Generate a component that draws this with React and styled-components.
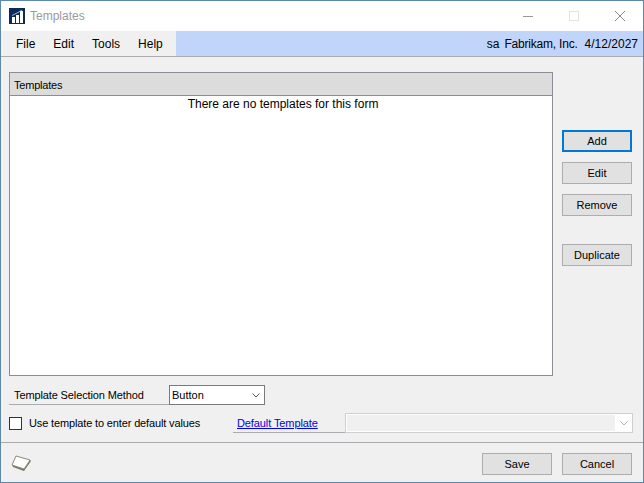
import styled, { createGlobalStyle } from "styled-components";

const GlobalStyle = createGlobalStyle`
  html, body {
    margin: 0;
    padding: 0;
    background: #f0f0f0;
  }
  * {
    box-sizing: border-box;
  }
`;

const Win = styled.div`
  width: 644px;
  height: 483px;
  display: flex;
  flex-direction: column;
  border: 1px solid #5d88a9;
  background: #f0f0f0;
  color: #000;
  font-family: "Liberation Sans", Arial, sans-serif;
  font-size: 11px;
  overflow: hidden;
`;

const TitleBar = styled.div`
  height: 30px;
  flex: none;
  display: flex;
  align-items: center;
  background: #fff;
  padding-left: 8px;
`;

const WinTitle = styled.span`
  margin-left: 5px;
  color: #9a9a9a;
  font-size: 12px;
`;

const WinControls = styled.div`
  margin-left: auto;
  display: flex;
`;

const WinControl = styled.div`
  width: 46px;
  height: 30px;
  display: flex;
  align-items: center;
  justify-content: center;
`;

const MenuRow = styled.div`
  height: 26px;
  flex: none;
  display: flex;
  background: #c1d5fb;
  border-bottom: 1px solid #acacb0;
  font-size: 12px;
`;

const MenuList = styled.div`
  width: 175px;
  display: flex;
  align-items: center;
  background: #f0f0f0;
  padding-left: 15px;
  gap: 18px;
`;

const UserInfo = styled.div`
  margin-left: auto;
  padding-right: 5px;
  display: flex;
  align-items: center;
  gap: 5px;
`;

const CompanyName = styled.span`
  margin-right: 2px;
  letter-spacing: -0.2px;
`;

const Body = styled.div`
  flex: 1;
  display: flex;
  flex-direction: column;
  padding: 15px 0 0 8px;
`;

const Main = styled.div`
  display: flex;
  height: 304px;
`;

const TableBox = styled.div`
  width: 544px;
  display: flex;
  flex-direction: column;
  border: 1px solid #8c8c96;
  background: #fff;
`;

const TableHead = styled.div`
  height: 23px;
  flex: none;
  display: flex;
  align-items: center;
  padding: 1px 0 0 4px;
  background: #dcdcdc;
  border-bottom: 1px solid #8c8c96;
  letter-spacing: -0.2px;
`;

const EmptyText = styled.div`
  padding-left: 4px;
  text-align: center;
  font-size: 12px;
  line-height: 17px;
`;

const SideButtons = styled.div`
  display: flex;
  flex-direction: column;
  padding: 58px 0 0 9px;
`;

const Btn = styled.div`
  width: 70px;
  height: 22px;
  display: flex;
  align-items: center;
  justify-content: center;
  background: #e1e1e1;
  border: ${(p) => (p.$primary ? "2px solid #0078d7" : "1px solid #adadad")};
  margin-top: ${(p) => p.$top || 0}px;
`;

const SelectRow = styled.div`
  display: flex;
  margin-top: 9px;
  height: 20px;
`;

const FieldLabel = styled.div`
  width: 160px;
  padding: 4px 0 0 5px;
  border-bottom: 1px solid #acacb0;
  letter-spacing: -0.12px;
`;

const Select = styled.div`
  width: 96px;
  height: 20px;
  display: flex;
  align-items: center;
  justify-content: space-between;
  padding: 0 4px 0 2px;
  background: #fff;
  border: 1px solid #7a7a7a;
`;

const DefaultsRow = styled.div`
  display: flex;
  align-items: flex-start;
  margin-top: 8px;
  height: 20px;
`;

const CheckBox = styled.div`
  width: 13px;
  height: 13px;
  margin-top: 4px;
  background: #fff;
  border: 1px solid #333;
`;

const CheckLabel = styled.div`
  width: 204px;
  margin: 4px 0 0 7px;
  letter-spacing: -0.14px;
`;

const LinkCell = styled.div`
  width: 112px;
  height: 20px;
  padding: 4px 0 0 4px;
  border-bottom: 1px solid #acacb0;
`;

const BlueLink = styled.span`
  color: #0000ee;
  text-decoration: underline;
  letter-spacing: -0.1px;
`;

const DisabledSelect = styled.div`
  width: 288px;
  height: 20px;
  display: flex;
  align-items: center;
  padding: 1px 4px 1px 1px;
  background: #fff;
  border: 1px solid #cfcfcf;
`;

const DisabledValue = styled.div`
  flex: 1;
  height: 100%;
  margin-right: 5px;
  background: #f0f0f0;
`;

const Footer = styled.div`
  margin: 9px 0 0 -8px;
  flex: 1;
  display: flex;
  align-items: flex-start;
  padding: 10px 11px 0 9px;
  border-top: 1px solid #a9a9ae;
`;

const FooterBtns = styled.div`
  margin-left: auto;
  display: flex;
  gap: 10px;
`;

const Chevron = ({ color }) => (
  <svg width="8" height="5" viewBox="0 0 8 5">
    <path d="M0.5 0.5 L4 4 L7.5 0.5" fill="none" stroke={color} />
  </svg>
);

const AppLogo = () => (
  <svg width="16" height="16" viewBox="0 0 16 16">
    <rect width="16" height="16" fill="#0b2a5b" />
    <rect x="3" y="9" width="3" height="6" fill="#fff" />
    <rect x="7" y="7" width="3" height="8" fill="#fff" />
    <rect x="11" y="3" width="3" height="12" fill="#fff" />
    <path d="M3 7.5 L9 4.5 L13 2" fill="none" stroke="#9db6d6" />
  </svg>
);

const NoteIcon = () => (
  <svg width="22" height="19" viewBox="0 0 22 19">
    <path d="M2 12 L3 14 L14 18 L21 8 L20 7 L14 16 Z" fill="#76735a" />
    <path d="M6 3 L20 7 L14 16 L2 12 Z" fill="#fff" stroke="#8a8a7a" />
  </svg>
);

function App() {
  return (
    <>
      <GlobalStyle />
      <Win>
        <TitleBar>
          <AppLogo />
          <WinTitle>Templates</WinTitle>
          <WinControls>
            <WinControl>
              <svg width="10" height="10" viewBox="0 0 10 10">
                <path d="M0 5.5 H10" stroke="#999" />
              </svg>
            </WinControl>
            <WinControl>
              <svg width="10" height="10" viewBox="0 0 10 10">
                <rect x="0.5" y="0.5" width="9" height="9" fill="none" stroke="#e3e3e3" />
              </svg>
            </WinControl>
            <WinControl>
              <svg width="10" height="10" viewBox="0 0 10 10">
                <path d="M0 0 L10 10 M10 0 L0 10" stroke="#888" />
              </svg>
            </WinControl>
          </WinControls>
        </TitleBar>
        <MenuRow>
          <MenuList>
            <span>File</span>
            <span>Edit</span>
            <span>Tools</span>
            <span>Help</span>
          </MenuList>
          <UserInfo>
            <span>sa</span>
            <CompanyName>Fabrikam, Inc.</CompanyName>
            <span>4/12/2027</span>
          </UserInfo>
        </MenuRow>
        <Body>
          <Main>
            <TableBox>
              <TableHead>Templates</TableHead>
              <EmptyText>There are no templates for this form</EmptyText>
            </TableBox>
            <SideButtons>
              <Btn $primary>Add</Btn>
              <Btn $top={10}>Edit</Btn>
              <Btn $top={10}>Remove</Btn>
              <Btn $top={28}>Duplicate</Btn>
            </SideButtons>
          </Main>
          <SelectRow>
            <FieldLabel>Template Selection Method</FieldLabel>
            <Select>
              Button
              <Chevron color="#555" />
            </Select>
          </SelectRow>
          <DefaultsRow>
            <CheckBox />
            <CheckLabel>Use template to enter default values</CheckLabel>
            <LinkCell>
              <BlueLink>Default Template</BlueLink>
            </LinkCell>
            <DisabledSelect>
              <DisabledValue />
              <Chevron color="#b5b5b5" />
            </DisabledSelect>
          </DefaultsRow>
          <Footer>
            <NoteIcon />
            <FooterBtns>
              <Btn>Save</Btn>
              <Btn>Cancel</Btn>
            </FooterBtns>
          </Footer>
        </Body>
      </Win>
    </>
  );
}

export default App;
